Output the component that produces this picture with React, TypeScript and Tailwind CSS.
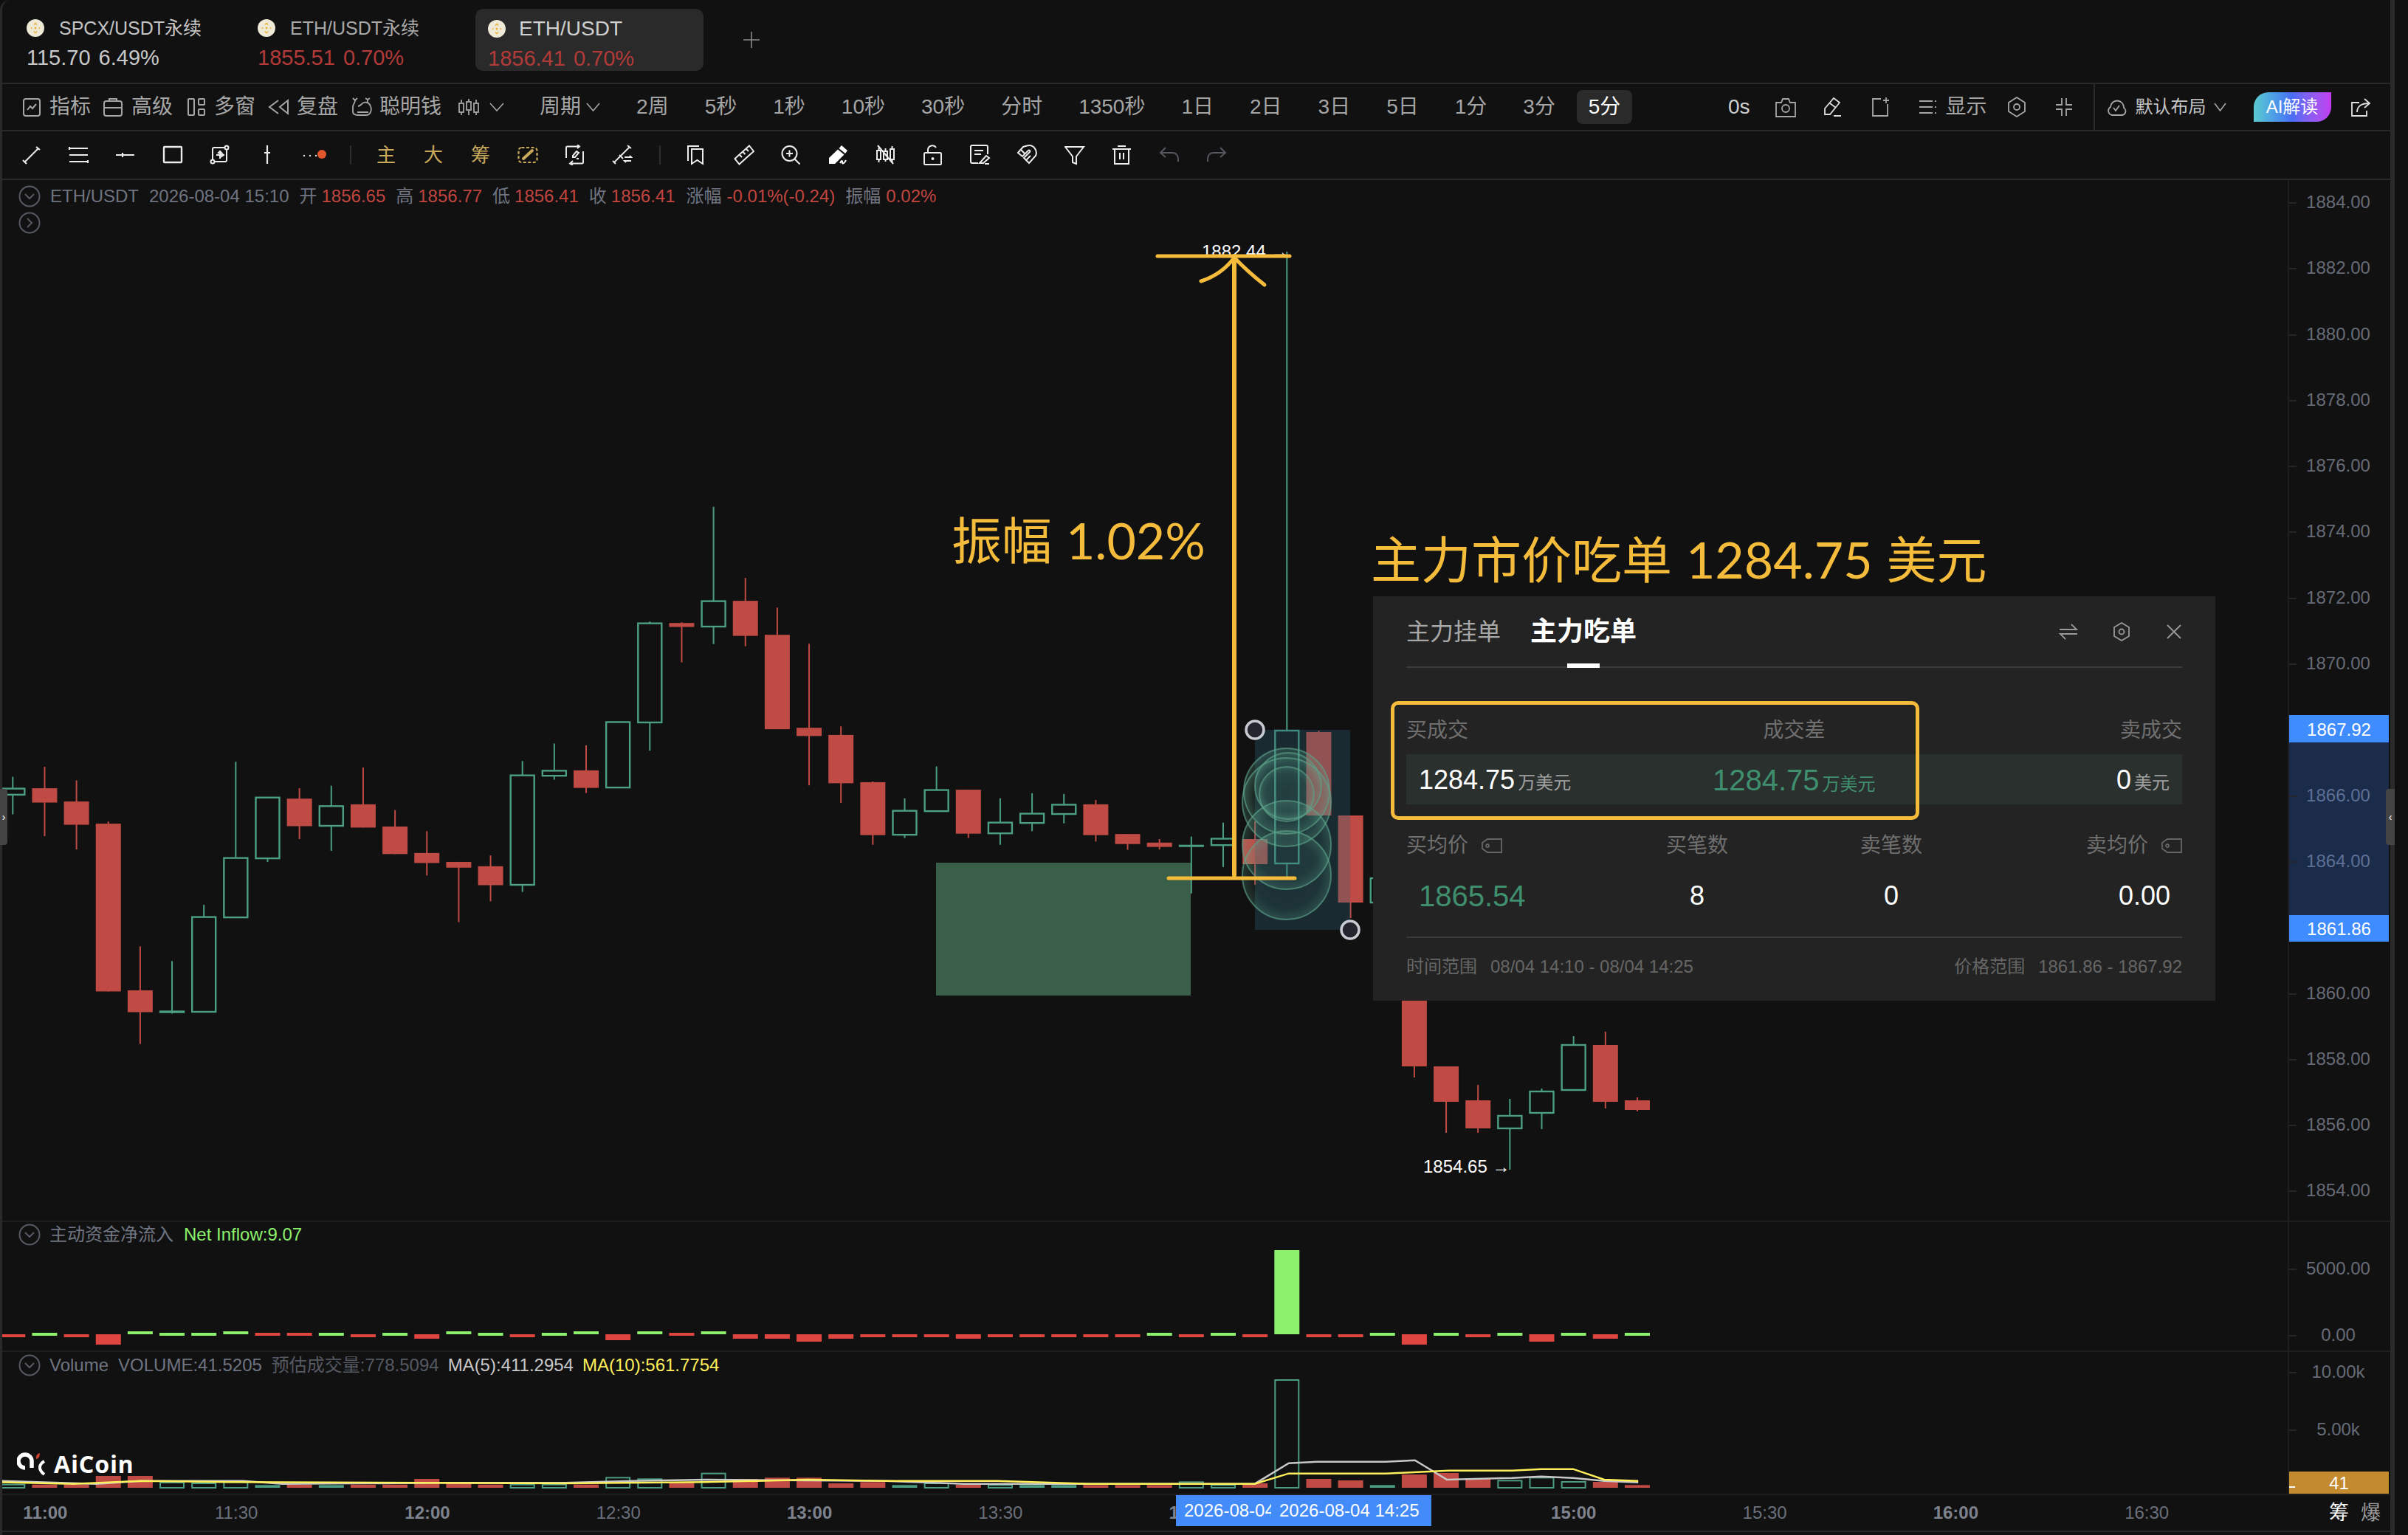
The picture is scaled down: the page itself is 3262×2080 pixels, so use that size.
import React from "react";

const Y = (z: number) => 660 + z * 0.4847;
const CX = (i: number) => 17.3 + 43.15 * i;
type C = [string, number, number, number, number];
const zc: C[] = [
  ["G",810,843,860,915],["R",782,842,882,976],["R",820,879,944,1013],["R",935,941,1410,1410],["R",1284,1407,1468,1557],
  ["G",1325,1466,1468,1472],["G",1168,1202,1467,1468],["G",768,1037,1203,1203],["G",868,868,1038,1048],["R",842,871,948,984],
  ["G",835,892,947,1017],["R",784,887,952,952],["R",903,949,1026,1026],["R",962,1023,1051,1086],["R",1048,1048,1064,1216],
  ["R",1030,1060,1113,1158],["G",766,806,1112,1132],["G",717,793,807,818],["R",722,792,841,855],["G",657,657,840,841],
  ["G",376,381,658,737],["R",378,380,391,490],["G",55,319,390,439],["R",254,318,416,445],["R",337,413,677,677],
  ["R",438,673,696,834],["R",669,693,828,883],["R",823,825,973,1000],["G",870,905,972,981],["G",781,847,906,907],
  ["R",846,846,969,981],["G",870,938,968,1000],["G",856,913,939,962],["G",858,888,914,940],["R",875,887,973,991],
  ["R",970,970,998,1014],["R",984,994,1006,1013],["F",977,1000,1005,1136],["G",938,983,1001,1062],
];
const candles: C[] = [
  ...zc.map((c) => [c[0], Y(c[1]), Y(c[2]), Y(c[3]), Y(c[4])] as C),
  ["R",1113,1137,1171,1199],["G",341,990,1170,1190],["R",990,992,1105,1105],["R",1105,1105,1223,1244],["G",1180,1190,1223,1250],
  ["R",1300,1356,1445,1460],["R",1445,1445,1493,1535],["R",1470,1491,1529,1535],["G",1489,1512,1529,1585],["G",1475,1479,1508,1530],
  ["G",1404,1416,1477,1477],["R",1398,1416,1493,1502],["R",1487,1491,1504,1506],
];
const flows: [string, number, number][] = [
  ["R",504,516],["G",498,510],["R",504,516],["R",504,546],["G",492,504],["G",498,510],["G",498,510],["G",492,504],["R",498,510],["R",498,510],
  ["G",498,510],["R",504,516],["G",498,510],["R",504,522],["G",492,504],["G",498,510],["R",504,516],["G",498,510],["G",492,504],["R",504,528],
  ["G",492,504],["R",498,510],["G",492,504],["R",504,522],["R",504,522],["R",504,534],["R",504,522],["R",504,516],["R",504,516],["R",504,516],
  ["R",504,522],["R",504,516],["R",504,516],["R",504,516],["R",504,516],["R",504,516],["G",498,510],["R",504,516],["G",498,510],["R",504,516],
  ["G",162,504],["R",504,516],["R",504,516],["G",498,510],["R",504,546],["G",498,510],["R",504,516],["G",498,510],["R",504,534],["G",498,510],
  ["R",504,522],["G",498,510],
];
const vols: [string, number][] = [
  ["H",1115],["R",1115],["R",1115],["R",1080],["R",1080],["H",1107],["H",1110],["H",1105],["F",1117],["R",1115],
  ["F",1117],["R",1115],["R",1115],["R",1092],["R",1105],["R",1115],["H",1115],["H",1115],["R",1115],["H",1087],
  ["H",1093],["R",1105],["H",1070],["R",1092],["R",1087],["R",1087],["R",1110],["R",1105],["F",1117],["H",1110],
  ["R",1115],["H",1117],["F",1117],["F",1117],["R",1117],["R",1117],["R",1117],["H",1105],["H",1117],["R",1110],
  ["H",690],["R",1092],["R",1098],["F",1117],["R",1074],["R",1068],["R",1092],["H",1099],["H",1087],["H",1104],
  ["R",1104],["R",1117],
];
const VY = (z: number) => 1640 + z / 3;
const z5 = (x: number, y: number) => `${x / 1.3067},${VY(y)}`;
const z6 = (x: number, y: number) => `${1200 + x / 0.7604},${VY(y)}`;
const yellow = [z5(0,1105),z5(130,1112),z5(250,1100),z5(400,1105),z5(1000,1110),z5(1250,1105),z5(1430,1095),z6(0,1100),z6(115,1100),z6(210,1112),z6(380,1112),z6(415,1070),z6(515,1070),z6(580,1058),z6(645,1058),z6(675,1052),z6(708,1052),z6(740,1095),z6(775,1100)].join(" ");
const white = [z5(0,1100),z5(170,1112),z5(250,1100),z5(430,1100),z5(500,1112),z5(780,1108),z5(1000,1108),z5(1120,1100),z5(1250,1095),z6(0,1100),z6(80,1112),z6(380,1112),z6(415,1028),z6(445,1022),z6(515,1022),z6(545,1016),z6(578,1095),z6(645,1088),z6(675,1082),z6(708,1088),z6(740,1100),z6(775,1106)].join(" ");

const RED = "#c04a44";
const GRN = "#4a9f85";

function Ic({ w = 28, h = 28, sw = 1.8, children, className = "" }: { w?: number; h?: number; sw?: number; children: React.ReactNode; className?: string }) {
  return (
    <svg width={w} height={h} viewBox={`0 0 ${w} ${h}`} fill="none" stroke="currentColor" strokeWidth={sw} className={`shrink-0 ${className}`}>
      {children}
    </svg>
  );
}
function Coin() {
  return (
    <svg width="24" height="24" viewBox="0 0 24 24" className="shrink-0">
      <circle cx="12" cy="12" r="12" fill="#efe9d8" />
      <g fill="#eab233">
        <path d="M12 4.500l2.600 2.600-1 1L12 6.500l-1.600 1.600-1-1z" />
        <path d="M12 19.500l-2.600-2.600 1-1 1.600 1.600 1.600-1.600 1 1z" />
        <path d="M12 10.200l1.800 1.800-1.800 1.800-1.800-1.800z" />
        <path d="M6.600 10.800l1.200 1.200-1.200 1.200L5.400 12z" />
        <path d="M17.400 10.800l1.200 1.200-1.200 1.200-1.200-1.200z" />
      </g>
    </svg>
  );
}
function Chev({ w = 20, h = 12 }: { w?: number; h?: number }) {
  return (
    <svg width={w} height={h} viewBox={`0 0 ${w} ${h}`} fill="none" stroke="currentColor" strokeWidth="1.6" className="shrink-0">
      <path d={`M1 1L${w / 2} ${h - 1}L${w - 1} 1`} />
    </svg>
  );
}
function RoundChev({ right = false }: { right?: boolean }) {
  return (
    <svg width="30" height="30" viewBox="0 0 30 30" fill="none" stroke="#565a63" strokeWidth="2" className="shrink-0">
      <circle cx="15" cy="15" r="13.500" />
      <path d={right ? "M12 9l6 6-6 6" : "M9 12l6 6 6-6"} />
    </svg>
  );
}

const drawIcons1: React.ReactNode[] = [
  <Ic key="a" sw={2}><path d="M5 24L24 5" /><path d="M3 21l5 5M21 3l5 4" /></Ic>,
  <Ic key="b" sw={2.2}><path d="M2 5h25M2 14h25M2 23h25" /><path d="M2 3v4M27 21v4" /></Ic>,
  <Ic key="c" sw={2.2}><path d="M1 14h25M10 11v6" /></Ic>,
  <Ic key="d" sw={2.4}><rect x="2" y="3" width="24" height="21" rx="1" /></Ic>,
  <Ic key="e" sw={2}><rect x="4" y="4" width="19" height="19" rx="2" /><circle cx="23" cy="4" r="2.500" fill="#111" /><circle cx="4" cy="23" r="2.500" fill="#111" /><path d="M14 9v10M11 12l3-3 3 3M9 14h9M15 11l4 3-4 3" /></Ic>,
  <Ic key="f"><path d="M14 1v25M10 11h8" strokeWidth="2.200" /></Ic>,
  <svg key="g" width="32" height="28" viewBox="0 0 32 28" className="shrink-0"><circle cx="2" cy="15" r="1.200" fill="#ddd" /><circle cx="10" cy="15" r="1.200" fill="#ddd" /><circle cx="18" cy="15" r="1.200" fill="#ddd" /><circle cx="26" cy="13" r="6" fill="#e2562d" /></svg>,
];
const drawIcons2: React.ReactNode[] = [
  <Ic key="a" className="text-[#c9a95a]"><rect x="1.500" y="4" width="25" height="20" rx="4" strokeDasharray="4 2.500" strokeWidth="2.200" /><path d="M8 19L20 8" strokeWidth="4" strokeLinecap="round" /></Ic>,
  <Ic key="b" sw={2}><path d="M2 18V4a1.500 1.500 0 011.500-1.500H19M17 0l3 2.500-3 2.500" /><path d="M25 9v15a1.500 1.500 0 01-1.500 1.500H8M11 22l-4 3.500L11 28" /><path d="M11 15l5-6 3 2-5 6h-3zM16 19h3" /></Ic>,
  <Ic key="c" sw={1.800}><path d="M3 24L24 3M1 22l4 4M21 1l5 4M10 14l5 5" /><path d="M17 17h9l-2-2M26 22h-9l2 2" strokeWidth="2" /></Ic>,
];
const drawIcons3: React.ReactNode[] = [
  <Ic key="a" sw={2}><path d="M2 22V2h15" /><path d="M7 6h15v20l-7.500-5L7 26z" /></Ic>,
  <Ic key="b" sw={2}><path d="M1.500 19L21 1.500 27 9 7.500 26.500z" /><path d="M8 14l3 3M12.500 10l3 3M17 6l3 3" /></Ic>,
  <Ic key="c" sw={2}><circle cx="11.500" cy="12" r="10" /><path d="M18.500 19.500l7 7M11.500 7.500v9M7 12h9" /></Ic>,
  <svg key="d" width="28" height="28" viewBox="0 0 28 28" fill="#fff" className="shrink-0"><path d="M18 1l8 7-3 4-8.500-7zM13 6.500l8.500 7L9 26H1v-8z" /><path d="M16 25c2-4 3-4 3-1s3 1 5-3" fill="none" stroke="#fff" strokeWidth="2" /></svg>,
  <Ic key="e" sw={2}><rect x="2" y="8" width="5" height="12" /><rect x="11" y="9" width="5" height="11" /><rect x="20" y="6" width="5" height="14" /><path d="M4.500 4v4M4.500 20v4M13.500 5v4M13.500 20v3M22.500 2v4M22.500 20v4M3 1l21 25" /></Ic>,
  <Ic key="f" sw={2}><rect x="2" y="11" width="23" height="16" rx="1.500" /><path d="M7 11V7a6 6 0 0111-3" /><circle cx="13.500" cy="19" r="1" fill="currentColor" /></Ic>,
  <Ic key="g" sw={2}><path d="M24 13V3a2 2 0 00-2-2H3a2 2 0 00-2 2v20a2 2 0 002 2h8" /><path d="M6 8h12M6 13h9" /><path d="M13 25l9-10 4 3-8 7zM20 26h6" /></Ic>,
  <Ic key="h" sw={2}><path d="M1 11L8 3l5-1.500C22-1 28 8 25 15l-9 10-7-7 8-8c1-2-1-3-2-2l-8 8z" /><path d="M5 7l5 5M12 21l6-6" /></Ic>,
  <Ic key="i" sw={2}><path d="M1 3h25L16 16v10l-5-2v-8z" /></Ic>,
  <Ic key="j" sw={2}><path d="M1 6h25M4 6v20h19V6M8 2h11M11 11v9M16 11v9" /></Ic>,
  <Ic key="k" sw={2} className="text-[#55585e]"><path d="M9 4L2 11l7 6M2 11h17q8 1 7 12" /></Ic>,
  <Ic key="l" sw={2} className="text-[#55585e]"><path d="M19 4l7 7-7 6M26 11H9q-8 1-7 12" /></Ic>,
];

function Legend({ className, children }: { className: string; children: React.ReactNode }) {
  return <div className={`absolute left-[22px] flex items-center text-[24px] leading-[30px] whitespace-nowrap text-[#6f7480] ${className}`}>{children}</div>;
}
function AxisRow({ label, className = "", labelClass = "text-[#666b76]" }: { label: string; className?: string; labelClass?: string }) {
  return (
    <div className={`relative z-10 flex items-center justify-center text-[24px] ${labelClass} ${className}`}>
      <span className="absolute left-0 top-1/2 h-[2px] w-[10px] bg-[#26262a]" />
      {label}
    </div>
  );
}
function PanelLabelIcon() {
  return (
    <svg width="28" height="20" viewBox="0 0 28 20" fill="none" stroke="#666" strokeWidth="1.8" className="shrink-0">
      <path d="M8 1h19v18H8L1 14V6z" />
      <circle cx="8" cy="10" r="2" />
    </svg>
  );
}

export default function App() {
  const periods = ["2周","5秒","1秒","10秒","30秒","分时","1350秒","1日","2日","3日","5日","1分","3分"];
  const prices = [1884,1882,1880,1878,1876,1874,1872,1870,1868,1866,1864,1862,1860,1858,1856,1854];
  const times = ["11:00","11:30","12:00","12:30","13:00","13:30","14:00","14:30","15:00","15:30","16:00","16:30"];
  return (
    <div className="h-[2080px] w-[3262px] overflow-hidden bg-[#0f0f10] [font-family:'Liberation_Sans','Noto_Sans_CJK_SC',sans-serif]">
      <div className="flex h-full w-[3244px] flex-col rounded-tl-[14px] border-x-[3px] border-r-[6px] border-[#2a2a2b] border-t-0 bg-[#111112]">
        {/* Tabs */}
        <div className="flex h-[114px] shrink-0 items-start border-b-2 border-[#2a2a2b] pl-[33px]">
          <div className="w-[313px] pt-[24px]">
            <div className="flex items-center gap-[20px] text-[25px] leading-[28px] text-[#c4c4c4]"><Coin />SPCX/USDT永续</div>
            <div className="mt-[10px] text-[29px] leading-[32px] text-[#c8c8c8] [word-spacing:3px]">115.70 6.49%</div>
          </div>
          <div className="w-[295px] pt-[24px]">
            <div className="flex items-center gap-[20px] text-[25px] leading-[28px] text-[#a8a8a8]"><Coin />ETH/USDT永续</div>
            <div className="mt-[10px] text-[29px] leading-[32px] text-[#b23a38] [word-spacing:3px]">1855.51 0.70%</div>
          </div>
          <div className="mt-[12px] h-[84px] w-[309px] rounded-[10px] bg-[#2a2a2b] pl-[17px] pt-[13px]">
            <div className="flex items-center gap-[18px] text-[28px] leading-[28px] text-[#cfcfcf]"><Coin />ETH/USDT</div>
            <div className="mt-[10px] text-[29px] leading-[32px] text-[#b23a38] [word-spacing:3px]">1856.41 0.70%</div>
          </div>
          <div className="ml-[53px] mt-[42px] text-[#8a8a8a]"><Ic w={24} h={24} sw={1.6}><path d="M12 1v22M1 12h22" /></Ic></div>
        </div>
        {/* Toolbar */}
        <div className="flex h-[64px] shrink-0 items-center border-b-2 border-[#2a2a2b] pl-[28px] text-[28px] text-[#a6a6a6]">
          <Ic w={24} sw={2}><rect x="1" y="3" width="22" height="23" rx="3" /><path d="M6 18l4-5 3 3 5-6" /></Ic>
          <span className="ml-[12px]">指标</span>
          <Ic w={26} sw={2} className="ml-[17px]"><rect x="1" y="6" width="24" height="20" rx="3" /><path d="M8 6V3h10v3M1 15h24" /></Ic>
          <span className="ml-[12px]">高级</span>
          <Ic w={24} sw={2} className="ml-[20px]"><rect x="1" y="3" width="8" height="22" rx="1" /><rect x="15" y="3" width="8" height="8" rx="1" /><rect x="15" y="17" width="8" height="8" rx="1" /></Ic>
          <span className="ml-[12px]">多窗</span>
          <Ic sw={2} className="ml-[17px]"><path d="M14 5L2 14l12 9M27 5l-11 9 11 9z" /></Ic>
          <span className="ml-[11px]">复盘</span>
          <Ic sw={1.8} className="ml-[18px]"><path d="M2 2l3 3 3-3M5 5c0 4-3 5-3 9v6c0 4 3 5 7 5h11c6 0 8-7 6-12-2-6-9-7-12-3-2 2-3 3-5 3" /><path d="M19 2l3 2 3-2M22 4v4M8 21h15" /></Ic>
          <span className="ml-[10px]">聪明钱</span>
          <Ic className="ml-[23px]"><rect x="1" y="9" width="6" height="12" /><rect x="11" y="7" width="6" height="11" /><rect x="21" y="9" width="6" height="12" /><path d="M4 4v5M4 21v4M14 3v4M14 18v7M24 4v5M24 21v4" /></Ic>
          <span className="ml-[14px]"><Chev /></span>
          <span className="ml-[48px]">周期</span>
          <span className="ml-[7px]"><Chev w={19} /></span>
          <div className="ml-[49px] flex gap-[49px]">{periods.map((p) => <span key={p}>{p}</span>)}</div>
          <span className="ml-[29px] flex h-[46px] w-[75px] items-center justify-center rounded-[8px] bg-[#2a2a2b] text-white">5分</span>
          <span className="ml-[130px] text-[#cfcfcf]">0s</span>
          <Ic w={30} className="ml-[33px]"><path d="M2 8h7l2-5h8l2 5h7v19H2z" /><circle cx="15" cy="16" r="5" /></Ic>
          <Ic w={26} className="ml-[36px] text-[#dcdcdc]"><path d="M2 24V16L14 2l8 6-13 16zM9 9l8 6M14 26h10" /></Ic>
          <Ic w={26} className="ml-[38px]"><path d="M14 3H3v23h20V10M21 1v8M17 5h8" /></Ic>
          <Ic w={26} className="ml-[39px]"><path d="M1 6h18M1 14h18M1 22h18M23 5v2M23 13v2M23 21v2" /></Ic>
          <span className="ml-[11px]">显示</span>
          <Ic w={26} className="ml-[27px]"><path d="M13 1l11 7v12l-11 7-11-7V8z" /><circle cx="13" cy="14" r="4" /></Ic>
          <Ic w={24} className="ml-[39px]"><path d="M9 2v9H1M15 2v9h8M9 26v-9H1M15 26v-9h8" /></Ic>
          <div className="ml-[28px] h-full w-[2px] bg-[#2a2a2b]" />
          <Ic className="ml-[15px]"><path d="M8 25a6 6 0 01-2-11 9 9 0 0118 1 5.500 5.500 0 01-2 10z" /><path d="M10 15l3 4 5-7" /></Ic>
          <span className="ml-[12px] text-[24px] text-[#c4c4c4]">默认布局</span>
          <span className="ml-[10px]"><Chev w={17} /></span>
          <div className="ml-[37px] flex h-[40px] w-[105px] items-center justify-center rounded-tl-[20px] rounded-br-[20px] bg-gradient-to-r from-[#5ccbcf] via-[#4a6cf5] to-[#c23df0] text-[24px] text-white">AI解读</div>
          <Ic className="ml-[26px] text-[#e0e0e0]"><path d="M12 8H2v18h20v-7" /><path d="M9 21c0-8 6-12 16-12M19 3l7 6-7 6" /></Ic>
        </div>
        {/* Drawing tools */}
        <div className="flex h-[66px] shrink-0 items-center border-b-2 border-[#2a2a2b] pl-[7px] text-[#ececec]">
          {drawIcons1.map((n, i) => <div key={i} className="flex w-[64px] justify-center">{n}</div>)}
          <div className="flex w-[33px] justify-center"><div className="h-[26px] w-[2px] bg-[#2c2c2e]" /></div>
          {["主","大","筹"].map((t) => <div key={t} className="flex w-[64px] justify-center text-[26px] text-[#c9a95a]">{t}</div>)}
          {drawIcons2.map((n, i) => <div key={i} className="flex w-[64px] justify-center">{n}</div>)}
          <div className="flex w-[37px] justify-center"><div className="h-[26px] w-[2px] bg-[#2c2c2e]" /></div>
          {drawIcons3.map((n, i) => <div key={i} className="flex w-[64px] justify-center">{n}</div>)}
        </div>
        {/* Main chart pane */}
        <div className="relative flex h-[1412px] shrink-0 border-b-2 border-[#1e1e21]">
          <div className="relative w-[3096px] shrink-0">
            <svg width="3096" height="1410" viewBox="3 244 3096 1410" className="block">
              <defs>
                <radialGradient id="bub">
                  <stop offset="0%" stopColor="#5aa88f" stopOpacity="0.03" />
                  <stop offset="75%" stopColor="#5aa88f" stopOpacity="0.07" />
                  <stop offset="100%" stopColor="#63b598" stopOpacity="0.24" />
                </radialGradient>
              </defs>
              <rect x="1268" y="1169" width="345" height="180" fill="#3a5f48" />
              <text x="1628" y="349" fill="#fff" fontSize="24">1882.44 →</text>
              <text x="1928" y="1589" fill="#fff" fontSize="24">1854.65 →</text>
              {candles.map((c, i) => {
                const x = CX(i);
                const col = c[0] === "R" ? RED : GRN;
                return (
                  <g key={i}>
                    <line x1={x} x2={x} y1={c[1]} y2={c[4]} stroke={col} strokeWidth="2" />
                    {c[0] === "G" ? (
                      <rect x={x - 16} y={c[2]} width="32" height={Math.max(c[3] - c[2], 1)} fill="#111112" stroke={col} strokeWidth="2.400" />
                    ) : (
                      <rect x={x - 17} y={c[2]} width="34" height={Math.max(c[3] - c[2], 3)} fill={col} />
                    )}
                  </g>
                );
              })}
              <rect x="1700" y="989" width="129" height="271" fill="rgb(45,101,115)" opacity="0.32" />
              {[[1743,1186,60],[1743,1145,60],[1743,1087,60],[1743,1072,58],[1745,1065,45],[1743,1076,37]].map((b, i) => (
                <circle key={i} cx={b[0]} cy={b[1]} r={b[2]} fill="url(#bub)" stroke="#5c9f87" strokeOpacity="0.65" strokeWidth="2" />
              ))}
              <circle cx="1700" cy="989" r="12" fill="#24252d" stroke="#c9ccd2" strokeWidth="3.500" />
              <circle cx="1829" cy="1260" r="12" fill="#24252d" stroke="#c9ccd2" strokeWidth="3.500" />
              <g stroke="#f5bc3c" strokeLinecap="round" fill="none">
                <line x1="1672" x2="1672" y1="347" y2="1186" strokeWidth="6" />
                <line x1="1568" x2="1747" y1="347" y2="347" strokeWidth="5" />
                <line x1="1583" x2="1754" y1="1190" y2="1190" strokeWidth="5" />
                <path d="M1627 381Q1655 372 1672 349Q1690 368 1713 386" strokeWidth="5" />
              </g>
            </svg>
            <Legend className="top-[7px]">
              <RoundChev />
              <span className="ml-[13px]">ETH/USDT</span>
              <span className="ml-[14px]">2026-08-04 15:10</span>
              <span className="ml-[14px]">开</span><span className="ml-[6px] text-[#c0453f]">1856.65</span>
              <span className="ml-[14px]">高</span><span className="ml-[6px] text-[#c0453f]">1856.77</span>
              <span className="ml-[14px]">低</span><span className="ml-[6px] text-[#c0453f]">1856.41</span>
              <span className="ml-[14px]">收</span><span className="ml-[6px] text-[#c0453f]">1856.41</span>
              <span className="ml-[15px]">涨幅</span><span className="ml-[7px] text-[#c0453f]">-0.01%(-0.24)</span>
              <span className="ml-[14px]">振幅</span><span className="ml-[7px] text-[#c0453f]">0.02%</span>
            </Legend>
            <div className="absolute left-[22px] top-[43px]"><RoundChev right /></div>
            <div className="absolute left-[-3px] top-[825px] flex h-[76px] w-[10px] items-center justify-center rounded-r-[4px] bg-[#444] text-[14px] text-white">›</div>
            <div className="absolute left-[1286px] top-[448px] whitespace-nowrap text-[68px] leading-[80px] text-[#f5bc3c]">振幅 <span className="[font-family:Lato,sans-serif]">1.02%</span></div>
            <div className="absolute left-[1854px] top-[472px] whitespace-nowrap text-[68px] leading-[84px] text-[#f5bc3c]">主力市价吃单 <span className="[font-family:Lato,sans-serif]">1284.75</span> 美元</div>
            {/* Order panel */}
            <div className="absolute left-[1857px] top-[564px] flex h-[548px] w-[1141px] flex-col bg-[#232323] px-[45px]">
              <div className="relative flex h-[97px] shrink-0 items-center border-b-2 border-[#3a3a3a]">
                <span className="text-[32px] text-[#a8a8a8]">主力挂单</span>
                <span className="ml-[40px] text-[36px] font-bold text-white">主力吃单</span>
                <span className="absolute bottom-[-2px] left-[218px] h-[6px] w-[44px] bg-white" />
                <div className="ml-auto flex items-center text-[#999]">
                  <Ic w={26} h={26} sw={1.8}><path d="M1 10h23l-7-7M25 16H2l7 7" /></Ic>
                  <Ic w={26} h={26} sw={1.8} className="ml-[46px]"><path d="M13 1l10 6v12l-10 6-10-6V7z" /><circle cx="13" cy="13" r="3.500" /></Ic>
                  <Ic w={22} h={22} sw={1.8} className="ml-[47px]"><path d="M2 2l18 18M20 2L2 20" /></Ic>
                </div>
              </div>
              <div className="mt-[67px] flex justify-between text-[28px] leading-[36px] text-[#6f6f6f]">
                <span className="w-[200px]">买成交</span><span>成交差</span><span className="w-[200px] text-right">卖成交</span>
              </div>
              <div className="mt-[14px] flex h-[68px] items-center bg-[#2a302e] px-[17px] pt-[2px]">
                <div className="flex w-[398px] items-baseline text-[36px] text-white">1284.75<span className="ml-[4px] text-[24px] text-[#a0a0a0]">万美元</span></div>
                <div className="flex items-baseline text-[40px] text-[#3f8f6f]">1284.75<span className="ml-[4px] text-[24px]">万美元</span></div>
                <div className="ml-auto flex items-baseline text-[36px] text-white">0<span className="ml-[4px] text-[24px] text-[#a0a0a0]">美元</span></div>
              </div>
              <div className="mt-[38px] grid grid-cols-[262px_264px_262px_1fr] text-[28px] leading-[36px] text-[#6f6f6f]">
                <span className="flex items-center gap-[18px]">买均价<PanelLabelIcon /></span>
                <span className="text-center">买笔数</span>
                <span className="text-center">卖笔数</span>
                <span className="flex items-center justify-end gap-[18px]">卖均价<PanelLabelIcon /></span>
              </div>
              <div className="mt-[28px] grid grid-cols-[262px_264px_262px_1fr] items-center text-[36px] leading-[44px] text-white">
                <span className="pl-[17px] text-[40px] text-[#3f8f6f]">1865.54</span>
                <span className="text-center">8</span>
                <span className="text-center">0</span>
                <span className="pr-[16px] text-right">0.00</span>
              </div>
              <div className="mt-[33px] flex h-[79px] items-center justify-between border-t-2 border-[#3a3a3a] text-[24px] text-[#666]">
                <span><span className="mr-[18px]">时间范围</span>08/04 14:10 - 08/04 14:25</span>
                <span><span className="mr-[18px]">价格范围</span>1861.86 - 1867.92</span>
              </div>
              <div className="absolute left-[24px] top-[142px] h-[161px] w-[716px] rounded-[10px] border-[5px] border-[#f5bc3c]" />
            </div>
          </div>
          <div className="relative w-[139px] shrink-0 border-l-2 border-[#1e1e21] pr-[4px]">
            <div className="absolute left-0 top-[762px] h-[234px] w-[135px] bg-[#1b2c4a]" />
            <div className="-mt-[14.65px]">
              {prices.map((p) => (
                <AxisRow key={p} label={p.toFixed(2)} className="h-[89.3px]" labelClass={p === 1866 || p === 1864 ? "text-[#5d6f95]" : "text-[#666b76]"} />
              ))}
            </div>
            <div className="absolute left-0 top-[725px] z-20 flex h-[37px] w-[135px] items-center justify-center bg-[#3f8cff] pt-[2px] text-[24px] text-white">1867.92</div>
            <div className="absolute left-0 top-[996px] z-20 flex h-[36px] w-[135px] items-center justify-center bg-[#3f8cff] pt-[2px] text-[24px] text-white">1861.86</div>
            <div className="absolute left-[131px] top-[825px] z-30 flex h-[76px] w-[12px] items-center justify-center rounded-l-[4px] bg-[#444] text-[14px] text-white">‹</div>
          </div>
        </div>
        {/* Net inflow pane */}
        <div className="relative flex h-[176px] shrink-0 border-b-2 border-[#1e1e21]">
          <div className="relative w-[3096px] shrink-0">
            <svg width="3096" height="174" viewBox="3 1656 3096 174" className="block">
              {flows.map((f, i) => (
                <rect key={i} x={CX(i) - 17} y={VY(f[1])} width="34" height={(f[2] - f[1]) / 3} fill={f[0] === "R" ? "#e0463f" : "#8cf06c"} />
              ))}
            </svg>
            <Legend className="top-[2px]">
              <RoundChev />
              <span className="ml-[12px]">主动资金净流入</span>
              <span className="ml-[14px] text-[#8df06c]">Net Inflow:9.07</span>
            </Legend>
          </div>
          <div className="w-[139px] shrink-0 border-l-2 border-[#1e1e21] pr-[4px] pt-[18px]">
            <AxisRow label="5000.00" className="h-[90px]" />
            <AxisRow label="0.00" className="h-[90px]" />
          </div>
        </div>
        {/* Volume pane */}
        <div className="relative flex h-[194px] shrink-0 border-b-2 border-[#1e1e21]">
          <div className="relative w-[3096px] shrink-0">
            <svg width="3096" height="192" viewBox="3 1832 3096 192" className="block">
              {vols.map((v, i) => {
                const y = VY(v[1]);
                const x = CX(i);
                const h = 2016 - y;
                if (v[0] === "H") return <rect key={i} x={x - 16} y={y} width="32" height={h} fill="none" stroke="#4c9c83" strokeWidth="2" />;
                return <rect key={i} x={x - 17} y={y} width="34" height={h} fill={v[0] === "R" ? RED : "#4c9c83"} />;
              })}
              <polyline points={white} fill="none" stroke="#c8c8c8" strokeWidth="2.500" />
              <polyline points={yellow} fill="none" stroke="#ffef5a" strokeWidth="2.500" />
            </svg>
            <Legend className="top-[3px]">
              <RoundChev />
              <span className="ml-[12px]">Volume</span>
              <span className="ml-[13px]">VOLUME:41.5205</span>
              <span className="ml-[13px] text-[#555962]">预估成交量:778.5094</span>
              <span className="ml-[12px] text-[#c8c8c8]">MA(5):411.2954</span>
              <span className="ml-[12px] text-[#ffef5a]">MA(10):561.7754</span>
            </Legend>
            <div className="absolute left-[20px] top-[134px] flex items-center">
              <svg width="40" height="32" viewBox="0 0 40 32" fill="none">
                <path d="M20 21V12A9 9 0 1 0 11 21" stroke="#fff" strokeWidth="5.500" />
                <path d="M37 12C30 16 28 23 37 30" stroke="#fff" strokeWidth="4" />
                <path d="M31 1C27 2 25 5 26 9 29 9 31 6 31 1Z" fill="#c9402f" />
              </svg>
              <span className="ml-[10px] text-[32px] font-bold leading-[36px] tracking-[1px] text-white [font-family:'Noto_Sans',sans-serif]">AiCoin</span>
            </div>
          </div>
          <div className="relative w-[139px] shrink-0 border-l-2 border-[#1e1e21] pr-[4px]">
            <AxisRow label="10.00k" className="h-[54px]" />
            <AxisRow label="5.00k" className="mt-[24px] h-[54px]" />
            <div className="absolute bottom-0 left-0 flex h-[30px] w-[135px] items-end justify-center bg-[#c48a2e] text-[24px] leading-[28px] text-white">
              <span className="absolute left-0 top-[20px] h-[2px] w-[8px] bg-white" />41
            </div>
          </div>
        </div>
        {/* X axis */}
        <div className="relative flex h-[50px] shrink-0 items-center overflow-hidden border-b-2 border-[#2a2a2b] text-[24px] text-[#6a6f7a]">
          <div className="-ml-[71px] flex">
            {times.map((t) => (
              <span key={t} className={`w-[258.8px] text-center ${t.endsWith(":00") ? "font-bold text-[#7d828d]" : ""}`}>{t}</span>
            ))}
          </div>
          <div className="absolute left-[1590px] top-0 flex h-[42px] w-[346px] items-center overflow-hidden bg-[#428bf9] pl-[11px] text-white">
            <span className="w-[118px] shrink-0 overflow-hidden whitespace-nowrap">2026-08-04</span>
            <span className="ml-[11px] whitespace-nowrap">2026-08-04 14:25</span>
          </div>
          <div className="absolute left-[3152px] flex gap-[16px] text-[27px]">
            <span className="text-white">筹</span><span className="text-[#9a9a9a]">爆</span>
          </div>
        </div>
        <div className="flex-1" />
      </div>
    </div>
  );
}
